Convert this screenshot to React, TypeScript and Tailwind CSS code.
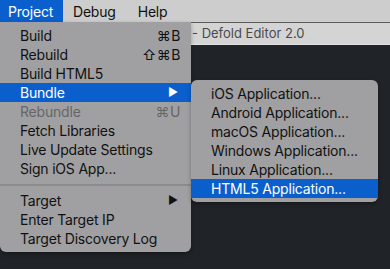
import React from "react";

const font = { fontFamily: "Inter, 'Noto Sans', sans-serif" };

function Row({
  label,
  shortcut,
  arrow,
  active,
  disabled,
}: {
  label: string;
  shortcut?: string;
  arrow?: boolean;
  active?: boolean;
  disabled?: boolean;
}) {
  return (
    <div
      className={`flex h-[19px] items-center pl-[20px] pr-[10px] text-[14px] leading-none tracking-[-0.2px] ${
        active ? "bg-[#0b5fcd] text-white" : disabled ? "text-[#666668]" : "text-[#111111]"
      }`}
    >
      <span className="flex-1 whitespace-nowrap">{label}</span>
      {shortcut && <span className="whitespace-nowrap tracking-[0.5px]">{shortcut}</span>}
      {arrow && <span className="text-[11px] pr-[3px]">▶</span>}
    </div>
  );
}

export default function App() {
  return (
    <div className="relative h-[269px] w-[390px] overflow-hidden bg-[#202327]" style={font}>
      <div className="flex h-[22px] items-center bg-[#cdcdcd] text-[14px] tracking-[-0.2px] text-[#111]">
        <div className="flex h-full w-[63px] items-center bg-[#0b5fcd] pl-[8px] text-white">Project</div>
        <div className="pl-[10px]">Debug</div>
        <div className="pl-[22px]">Help</div>
      </div>
      <div className="h-px bg-[#5a5a5a]" />
      <div className="flex h-[22px] items-center border-b border-[#e4e4e4] bg-[#d4d4d4] pl-[192px] text-[13px] text-[#4a4a4a]">
        - Defold Editor 2.0
      </div>

      <div className="absolute left-0 top-[22px] w-[191px] rounded-b-[6px] bg-[#a0a0a2] py-[4px] shadow-[0_2px_4px_rgba(0,0,0,0.3)]">
        <Row label="Build" shortcut="⌘B" />
        <Row label="Rebuild" shortcut="⇧⌘B" />
        <Row label="Build HTML5" />
        <Row label="Bundle" arrow active />
        <Row label="Rebundle" shortcut="⌘U" disabled />
        <Row label="Fetch Libraries" />
        <Row label="Live Update Settings" />
        <Row label="Sign iOS App..." />
        <div className="flex h-[13px] items-center">
          <div className="h-[2px] w-full bg-[#8c8c8e]" />
        </div>
        <Row label="Target" arrow />
        <Row label="Enter Target IP" />
        <Row label="Target Discovery Log" />
      </div>

      <div className="absolute left-[191px] top-[80px] w-[187px] rounded-[6px] bg-[#a0a0a2] py-[4px] shadow-[0_2px_4px_rgba(0,0,0,0.3)]">
        <Row label="iOS Application..." />
        <Row label="Android Application..." />
        <Row label="macOS Application..." />
        <Row label="Windows Application..." />
        <Row label="Linux Application..." />
        <Row label="HTML5 Application..." active />
      </div>
    </div>
  );
}
